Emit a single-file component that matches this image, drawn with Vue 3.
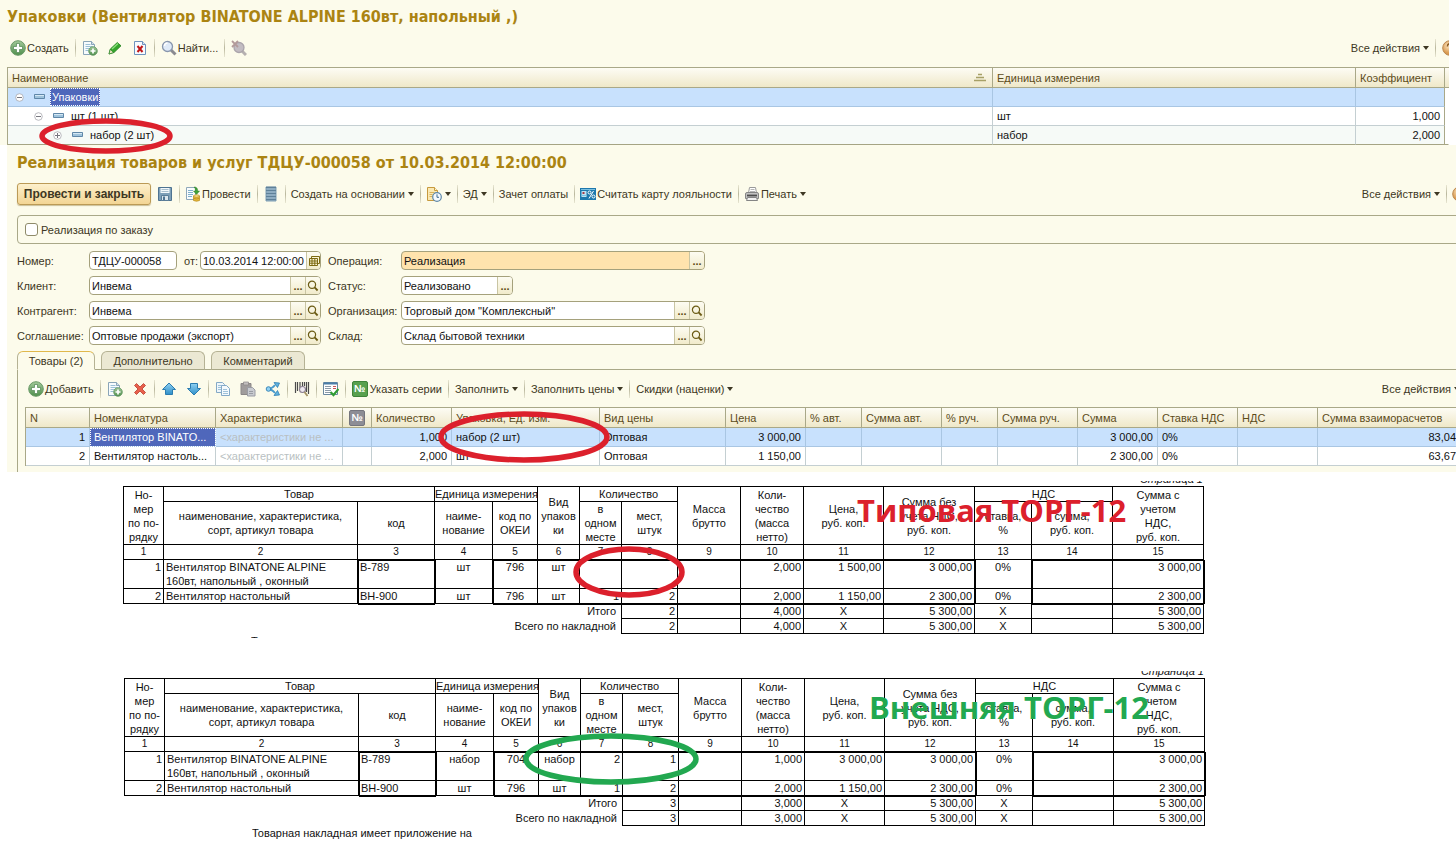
<script setup>
const packs = [
  { name: 'Упаковки', level: 0, open: true, unit: '', ratio: '', selected: true },
  { name: 'шт (1 шт)', level: 1, open: true, unit: 'шт', ratio: '1,000' },
  { name: 'набор (2 шт)', level: 2, open: false, unit: 'набор', ratio: '2,000', alt: true }
]

const goods = [
  { n: 1, name: 'Вентилятор BINATO...', qty: '1,000', pack: 'набор (2 шт)', price: '3 000,00', sum: '3 000,00', total: '83,04', selected: true },
  { n: 2, name: 'Вентилятор настоль...', qty: '2,000', pack: 'шт', price: '1 150,00', sum: '2 300,00', total: '63,67' }
]

const forms = [
  {
    id: 'standard',
    title: 'Типовая ТОРГ-12',
    rows: [
      { n: 1, name: ['Вентилятор BINATONE ALPINE', '160вт, напольный , оконный'], code: 'B-789', unit: 'шт', okei: '796', pack: 'шт', inOne: '', places: '', qty: '2,000', price: '1 500,00', sum: '3 000,00' },
      { n: 2, name: ['Вентилятор настольный'], code: 'BH-900', unit: 'шт', okei: '796', pack: 'шт', inOne: '1', places: '2', qty: '2,000', price: '1 150,00', sum: '2 300,00' }
    ],
    totals: { places: '2', qty: '4,000' }
  },
  {
    id: 'external',
    title: 'Внешняя ТОРГ-12',
    rows: [
      { n: 1, name: ['Вентилятор BINATONE ALPINE', '160вт, напольный , оконный'], code: 'B-789', unit: 'набор', okei: '704', pack: 'набор', inOne: '2', places: '1', qty: '1,000', price: '3 000,00', sum: '3 000,00' },
      { n: 2, name: ['Вентилятор настольный'], code: 'BH-900', unit: 'шт', okei: '796', pack: 'шт', inOne: '1', places: '2', qty: '2,000', price: '1 150,00', sum: '2 300,00' }
    ],
    totals: { places: '3', qty: '3,000' }
  }
]
</script>

<template>
  <svg class="sprite" aria-hidden="true">
    <defs>
      <linearGradient id="gGreen" x1="0" y1="0" x2="0" y2="1"><stop offset="0" stop-color="#a3c99a" /><stop offset="1" stop-color="#4f8f4c" /></linearGradient>
      <linearGradient id="gBlue" x1="0" y1="0" x2="0" y2="1"><stop offset="0" stop-color="#8fd0f2" /><stop offset="1" stop-color="#2f8fc8" /></linearGradient>
      <radialGradient id="gOrange" cx=".4" cy=".35"><stop offset="0" stop-color="#fde6c0" /><stop offset="1" stop-color="#d99a50" /></radialGradient>
    </defs>
    <symbol id="add" viewBox="0 0 16 16">
      <circle cx="8" cy="8" r="7.3" fill="url(#gGreen)" stroke="#6b9a68" />
      <path d="M6.5 3.500h3v3h3v3h-3v3h-3v-3h-3v-3h3z" fill="#fff" stroke="#4f8550" stroke-width=".7" />
    </symbol>
    <symbol id="copyadd" viewBox="0 0 16 16">
      <path d="M1.500 1.500h8l3 3v10h-11z" fill="#f7fbfd" stroke="#8aa5b8" />
      <path d="M9.500 1.500v3h3" fill="#cfe0ea" stroke="#8aa5b8" />
      <path d="M3.500 4.500h5M3.500 6.500h7M3.500 8.500h4M3.500 10.500h3" stroke="#9cc0d6" />
      <circle cx="11" cy="11" r="4.300" fill="url(#gGreen)" stroke="#5f9560" stroke-width=".8" />
      <path d="M11 8.500v5M8.500 11h5" stroke="#fff" stroke-width="1.700" />
    </symbol>
    <symbol id="pencil" viewBox="0 0 16 16">
      <path d="M2 14l1.300-5 7-6.500 3.700 3.300-7 6.700z" fill="#35a52c" stroke="#207d1c" stroke-width=".8" />
      <path d="M5 9l6-5.500" stroke="#8be07c" stroke-width="1.300" />
      <path d="M2 14l1.300-4.500 3.200 3z" fill="#f2e8c8" stroke="#207d1c" stroke-width=".6" />
    </symbol>
    <symbol id="deldoc" viewBox="0 0 16 16">
      <path d="M2.500 1.500h8l3 3v10h-11z" fill="#f8fbff" stroke="#6f93bd" />
      <path d="M10.500 1.500v3h3" fill="#d5e3f3" stroke="#6f93bd" />
      <path d="M5.500 6l5 6M10.500 6l-5 6" stroke="#c01818" stroke-width="2" />
    </symbol>
    <symbol id="find" viewBox="0 0 16 16">
      <path d="M10 10l4.500 4.500" stroke="#8a8a90" stroke-width="3" />
      <circle cx="6.500" cy="6.500" r="5" fill="#dfeaf8" stroke="#8896ad" stroke-width="1.300" />
      <path d="M3.500 6a3 3 0 0 1 3-3" fill="none" stroke="#fff" stroke-width="1.500" />
    </symbol>
    <symbol id="findoff" viewBox="0 0 16 16">
      <path d="M11 11l4 4" stroke="#b5b0b0" stroke-width="3" />
      <circle cx="8" cy="7.500" r="5" fill="#c2bcc2" stroke="#aaa4ab" stroke-width="1.300" />
      <path d="M1 1l6 6M7 1l-6 6" stroke="#b39a9a" stroke-width="1.800" />
    </symbol>
    <symbol id="help" viewBox="0 0 16 16">
      <circle cx="8" cy="8" r="7.300" fill="url(#gOrange)" stroke="#bb8850" />
      <path d="M5.500 6.500a2.500 2.500 0 1 1 3.500 2c-1 .5-1 .8-1 1.500M8 11.500v1.200" fill="none" stroke="#8a5a22" stroke-width="1.500" />
    </symbol>
    <symbol id="save" viewBox="0 0 16 16">
      <path d="M1.500 1.500h13v13h-13z" fill="#7d9fb8" stroke="#4e7391" />
      <path d="M3.500 2h9v5h-9z" fill="#f3f8fb" /><path d="M4.500 3.500h7M4.500 5.500h7" stroke="#a8bfce" />
      <path d="M4.500 9.500h7v5h-7z" fill="#dbe6ed" stroke="#5a7d98" /><path d="M6 10.500h2v3.500h-2z" fill="#4e7391" />
    </symbol>
    <symbol id="post" viewBox="0 0 16 16">
      <path d="M1.500 1.500h9v12h-9z" fill="#fafcfd" stroke="#8fa8ba" />
      <path d="M3 4.500h5M3 6.500h5M3 8.500h5M3 10.500h4" stroke="#7fb0cc" />
      <path d="M9 1q4 0 3.500 4h2l-3 3.500-3-3.500h2q.3-2.500-1.500-4z" fill="#41a338" stroke="#2c7d27" stroke-width=".5" />
      <path d="M8.500 10h6v4.500q-3 1.500-6 0z" fill="#e6b93c" stroke="#b98b1c" stroke-width=".7" />
      <ellipse cx="11.500" cy="10" rx="3" ry="1.200" fill="#fbe490" stroke="#b98b1c" stroke-width=".7" />
      <path d="M8.500 12.300q3 1.300 6 0" fill="none" stroke="#b98b1c" stroke-width=".7" />
    </symbol>
    <symbol id="register" viewBox="0 0 16 16">
      <path d="M3 1h10v14h-10z" fill="#9fbdd0" stroke="#7f9fb5" />
      <path d="M3 1.500h10M3 4.500h10M3 7.500h10M3 10.500h10M3 13.500h10" stroke="#5f8199" stroke-width="1.500" />
    </symbol>
    <symbol id="docclock" viewBox="0 0 16 16">
      <path d="M1.500 1.500h7l3 3v10h-10z" fill="#fbe9b2" stroke="#c79a3e" />
      <path d="M8.500 1.500v3h3" fill="#fff5d2" stroke="#c79a3e" />
      <path d="M3.500 6.500h5M3.500 8.500h3M3.500 10.500h3" stroke="#d8b25c" />
      <circle cx="11" cy="11" r="4.300" fill="#f5fafd" stroke="#5d87a8" stroke-width="1.200" />
      <path d="M11 8.300v3h2" fill="none" stroke="#3f6a8c" />
    </symbol>
    <symbol id="card" viewBox="0 0 16 16">
      <path d="M0 2h16v12h-16z" fill="#1d78ad" />
      <path d="M1.500 5h5v6h-5z" fill="#bfe2f2" /><path d="M2.500 6h2v2h-2z" fill="#a33a48" /><path d="M1.500 9.500h5M1 3.500h14" stroke="#7cc0e0" />
      <circle cx="9.500" cy="6.500" r="1.500" fill="none" stroke="#fff" /><circle cx="13.500" cy="10.500" r="1.500" fill="none" stroke="#fff" /><path d="M13.500 5l-4.500 7.500" stroke="#fff" />
    </symbol>
    <symbol id="printer" viewBox="0 0 16 16">
      <path d="M4.500 7l1-5.500h6l1 5.500" fill="#fff" stroke="#9a9a9a" /><path d="M6.500 3.500h4M6 5.500h5" stroke="#b5b5b5" />
      <path d="M1.500 8q0-1.500 1.500-1.500h10q1.500 0 1.500 1.500v4.500h-13z" fill="#c2c2c2" stroke="#858585" /><path d="M3 9.500h10" stroke="#4c4c4c" stroke-width="1.800" />
      <path d="M3.500 11.500h9l1 3h-11z" fill="#f2f2f2" stroke="#858585" />
    </symbol>
    <symbol id="cross" viewBox="0 0 16 16">
      <path d="M2.500 4.500l2-2 3.500 3.500 3.500-3.500 2 2-3.500 3.500 3.500 3.500-2 2-3.500-3.500-3.500 3.500-2-2 3.500-3.500z" fill="#e8604c" stroke="#b93b2c" stroke-width=".8" />
    </symbol>
    <symbol id="up" viewBox="0 0 16 16">
      <path d="M8 2l6.500 6.500h-3v5h-7v-5h-3z" fill="url(#gBlue)" stroke="#2b7cb0" />
    </symbol>
    <symbol id="down" viewBox="0 0 16 16">
      <path d="M8 14l6.500-6.500h-3v-5h-7v5h-3z" fill="url(#gBlue)" stroke="#2b7cb0" />
    </symbol>
    <symbol id="copy" viewBox="0 0 16 16">
      <path d="M1.500 1.500h6l2 2v8h-8z" fill="#eef6fb" stroke="#84a9c6" /><path d="M3 4.500h4M3 6.500h3M3 8.500h3" stroke="#9fc2da" />
      <path d="M6.500 4.500h5l3 3v7h-8z" fill="#f5fafd" stroke="#84a9c6" /><path d="M8 8.500h4M8 10.500h5M8 12.500h5" stroke="#9fc2da" />
    </symbol>
    <symbol id="paste" viewBox="0 0 16 16">
      <path d="M1 2.500h10v11h-10z" fill="#a09c9c" stroke="#8b8787" /><path d="M3.500 1h5v3h-5z" fill="#c3bfbf" stroke="#8b8787" stroke-width=".7" />
      <path d="M7.500 6.500h5l2.500 2.500v6h-7.500z" fill="#c9cbd0" stroke="#9a9ca4" /><path d="M9 10.500h4M9 12.500h4" stroke="#9a9ca4" />
    </symbol>
    <symbol id="share" viewBox="0 0 16 16">
      <path d="M2 8q5 0 8-4M2 8q5 0 8 4" fill="none" stroke="#4a9bcd" stroke-width="2" />
      <path d="M9 1.500l5.500.5-2 4.500zM9 14.500l5.500-.5-2-4.500z" fill="#5fb2e0" stroke="#2f7fb3" stroke-width=".8" />
      <circle cx="3.500" cy="8" r="2.300" fill="#8fd0f2" stroke="#2f7fb3" stroke-width=".9" />
    </symbol>
    <symbol id="barcode" viewBox="0 0 16 16">
      <path d="M1.500 1v11M3.500 1v9M6 1v6M8.500 1v4M10.500 1v4M12.500 1v10M14.500 1v12" stroke="#4b4b4b" stroke-width="1.200" />
      <circle cx="8.500" cy="8.500" r="3" fill="#eee9f0" stroke="#8b7f92" stroke-width="1.100" /><path d="M10.500 11l3 4" stroke="#a49468" stroke-width="1.800" />
    </symbol>
    <symbol id="listok" viewBox="0 0 16 16">
      <path d="M.5 1.500h14v12h-14z" fill="#fff" stroke="#6a88a0" /><path d="M1 2.500h13" stroke="#4b7ea8" stroke-width="2" />
      <path d="M2 5.500h6M2 7.500h6M2 9.500h6M2 11.500h6" stroke="#8b9aa8" /><path d="M10 5.500h3M10 7.500h3" stroke="#c55" />
      <path d="M7.500 11l3 3 5-6" fill="none" stroke="#2f9c33" stroke-width="2.200" />
    </symbol>
    <symbol id="calendar" viewBox="0 0 12 12">
      <path d="M3.500 1.500h8v7h-8z" fill="#fbf5d5" stroke="#7d6a12" /><path d="M1.500 3.500h8v7h-8z" fill="#fbf5d5" stroke="#7d6a12" />
      <path d="M1.500 6h8M1.500 8.200h8M4 3.500v7M6.800 3.500v7" stroke="#7d6a12" />
    </symbol>
    <symbol id="lens" viewBox="0 0 12 12">
      <circle cx="5" cy="4.800" r="3.600" fill="none" stroke="#6b5b14" stroke-width="1.200" /><path d="M7.600 7.400l3 3.100" stroke="#6b5b14" stroke-width="1.800" />
    </symbol>
    <symbol id="sort" viewBox="0 0 12 10">
      <path d="M4 1.500h4M2 4.500h8M0 7.500h12" stroke="#a7a066" stroke-width="1.600" />
    </symbol>
    <symbol id="item" viewBox="0 0 12 6">
      <path d="M.5.5h10v4h-10z" fill="#9fc3dc" stroke="#5f87a8" /><path d="M1 1.500h9" stroke="#d5e8f4" />
    </symbol>
  </svg>

  <main class="page">
    <section class="packs">
      <h1 class="title">Упаковки (Вентилятор BINATONE ALPINE 160вт, напольный ,)</h1>
      <div class="bar">
        <button class="tb"><svg class="ic"><use href="#add" /></svg>Создать</button>
        <i class="sep"></i>
        <button class="tb" aria-label="Скопировать"><svg class="ic"><use href="#copyadd" /></svg></button>
        <button class="tb wide" aria-label="Изменить"><svg class="ic"><use href="#pencil" /></svg></button>
        <button class="tb wide" aria-label="Удалить"><svg class="ic"><use href="#deldoc" /></svg></button>
        <i class="sep"></i>
        <button class="tb"><svg class="ic"><use href="#find" /></svg>Найти...</button>
        <i class="sep"></i>
        <button class="tb" aria-label="Отменить поиск"><svg class="ic"><use href="#findoff" /></svg></button>
        <div class="end">
          <button class="tb drop">Все действия</button>
          <i class="sep"></i>
          <button class="tb cut" aria-label="Справка"><svg class="ic"><use href="#help" /></svg></button>
        </div>
      </div>
      <table class="grid tree">
        <colgroup><col /><col class="c-unit" /><col class="c-ratio" /><col class="c-scroll" /></colgroup>
        <thead>
          <tr>
            <th><span class="sorted">Наименование<svg class="sort"><use href="#sort" /></svg></span></th>
            <th>Единица измерения</th>
            <th>Коэффициент</th>
            <th></th>
          </tr>
        </thead>
        <tbody>
          <tr v-for="p in packs" :key="p.name" :class="{ sel: p.selected, alt: p.alt }">
            <td>
              <span class="node" :class="'l' + p.level">
                <svg class="knob" viewBox="0 0 9 9"><circle cx="4.500" cy="4.500" r="3.800" fill="#fff" stroke="#a9a9b0" stroke-width=".8" /><path :d="p.open ? 'M2 4.500h5' : 'M2 4.500h5M4.500 2v5'" stroke="#77777f" /></svg>
                <svg class="item"><use href="#item" /></svg>
                <span class="label" :class="{ cur: p.selected }">{{ p.name }}</span>
              </span>
            </td>
            <td>{{ p.unit }}</td>
            <td class="num">{{ p.ratio }}</td>
            <td class="void"></td>
          </tr>
        </tbody>
      </table>
      <svg class="ring ring-tree" viewBox="0 0 134 36"><ellipse cx="67" cy="18" rx="64" ry="15" /></svg>
    </section>

    <section class="doc">
      <h2 class="title">Реализация товаров и услуг ТДЦУ-000058 от 10.03.2014 12:00:00</h2>
      <div class="bar">
        <button class="main-btn">Провести и закрыть</button>
        <button class="tb" aria-label="Записать"><svg class="ic"><use href="#save" /></svg></button>
        <i class="sep"></i>
        <button class="tb"><svg class="ic"><use href="#post" /></svg>Провести</button>
        <i class="sep"></i>
        <button class="tb" aria-label="Движения"><svg class="ic"><use href="#register" /></svg></button>
        <i class="sep"></i>
        <button class="tb drop">Создать на основании</button>
        <i class="sep"></i>
        <button class="tb drop" aria-label="Отчеты"><svg class="ic"><use href="#docclock" /></svg></button>
        <i class="sep"></i>
        <button class="tb drop">ЭД</button>
        <i class="sep"></i>
        <button class="tb">Зачет оплаты</button>
        <i class="sep"></i>
        <button class="tb"><svg class="ic"><use href="#card" /></svg>Считать карту лояльности</button>
        <i class="sep"></i>
        <button class="tb drop"><svg class="ic"><use href="#printer" /></svg>Печать</button>
        <div class="end">
          <button class="tb drop">Все действия</button>
          <i class="sep"></i>
          <button class="tb cut" aria-label="Справка"><svg class="ic"><use href="#help" /></svg></button>
        </div>
      </div>

      <div class="order">
        <input id="byOrder" type="checkbox" /><label for="byOrder">Реализация по заказу</label>
      </div>

      <div class="fields">
        <label for="num">Номер:</label>
        <div class="pair">
          <div class="fld short"><input id="num" value="ТДЦУ-000058" /></div>
          <label for="date">от:</label>
          <div class="fld grow"><input id="date" value="10.03.2014 12:00:00" /><button aria-label="Календарь"><svg><use href="#calendar" /></svg></button></div>
        </div>
        <label for="op">Операция:</label>
        <div class="fld req"><input id="op" value="Реализация" /><button>...</button></div>

        <label for="client">Клиент:</label>
        <div class="fld"><input id="client" value="Инвема" /><button>...</button><button aria-label="Открыть"><svg><use href="#lens" /></svg></button></div>
        <label for="status">Статус:</label>
        <div class="fld status"><input id="status" value="Реализовано" /><button>...</button></div>

        <label for="partner">Контрагент:</label>
        <div class="fld"><input id="partner" value="Инвема" /><button>...</button><button aria-label="Открыть"><svg><use href="#lens" /></svg></button></div>
        <label for="org">Организация:</label>
        <div class="fld"><input id="org" value="Торговый дом &quot;Комплексный&quot;" /><button>...</button><button aria-label="Открыть"><svg><use href="#lens" /></svg></button></div>

        <label for="deal">Соглашение:</label>
        <div class="fld"><input id="deal" value="Оптовые продажи (экспорт)" /><button>...</button><button aria-label="Открыть"><svg><use href="#lens" /></svg></button></div>
        <label for="store">Склад:</label>
        <div class="fld"><input id="store" value="Склад бытовой техники" /><button>...</button><button aria-label="Открыть"><svg><use href="#lens" /></svg></button></div>
      </div>

      <div class="tabs" role="tablist">
        <button role="tab" aria-selected="true" class="tab on">Товары (2)</button>
        <button role="tab" class="tab t2">Дополнительно</button>
        <button role="tab" class="tab t3">Комментарий</button>
      </div>

      <div class="panel">
        <div class="bar">
          <button class="tb"><svg class="ic"><use href="#add" /></svg>Добавить</button>
          <i class="sep"></i>
          <button class="tb" aria-label="Скопировать"><svg class="ic"><use href="#copyadd" /></svg></button>
          <button class="tb wide" aria-label="Удалить"><svg class="ic"><use href="#cross" /></svg></button>
          <i class="sep"></i>
          <button class="tb" aria-label="Вверх"><svg class="ic"><use href="#up" /></svg></button>
          <button class="tb wide" aria-label="Вниз"><svg class="ic"><use href="#down" /></svg></button>
          <i class="sep"></i>
          <button class="tb" aria-label="Копировать строки"><svg class="ic"><use href="#copy" /></svg></button>
          <button class="tb wide" aria-label="Вставить строки"><svg class="ic"><use href="#paste" /></svg></button>
          <button class="tb wide" aria-label="Разбить"><svg class="ic"><use href="#share" /></svg></button>
          <i class="sep"></i>
          <button class="tb" aria-label="Штрихкод"><svg class="ic"><use href="#barcode" /></svg></button>
          <i class="sep"></i>
          <button class="tb" aria-label="Проверить"><svg class="ic"><use href="#listok" /></svg></button>
          <i class="sep"></i>
          <button class="tb"><b class="no">№</b>Указать серии</button>
          <i class="sep"></i>
          <button class="tb drop">Заполнить</button>
          <i class="sep"></i>
          <button class="tb drop">Заполнить цены</button>
          <i class="sep"></i>
          <button class="tb drop">Скидки (наценки)</button>
          <div class="end"><button class="tb drop cut-drop">Все действия</button></div>
        </div>
        <table class="grid goods">
          <colgroup>
            <col class="w64" /><col class="w126" /><col class="w127" /><col class="w29" /><col class="w80" /><col class="w148" /><col class="w126" /><col class="w80" />
            <col class="w56" /><col class="w80" /><col class="w56" /><col class="w80" /><col class="w80" /><col class="w80" /><col class="w80" /><col />
          </colgroup>
          <thead>
            <tr>
              <th>N</th><th>Номенклатура</th><th>Характеристика</th><th class="mid"><b class="no grey">№</b></th><th>Количество</th><th>Упаковка, Ед. изм.</th><th>Вид цены</th><th>Цена</th>
              <th>% авт.</th><th>Сумма авт.</th><th>% руч.</th><th>Сумма руч.</th><th>Сумма</th><th>Ставка НДС</th><th>НДС</th><th class="edge">Сумма взаиморасчетов</th>
            </tr>
          </thead>
          <tbody>
            <tr v-for="g in goods" :key="g.n" :class="{ sel: g.selected }">
              <td class="num">{{ g.n }}</td>
              <td :class="{ curcell: g.selected }">{{ g.name }}</td>
              <td class="dim">&lt;характеристики не ...</td>
              <td></td>
              <td class="num">{{ g.qty }}</td>
              <td>{{ g.pack }}</td>
              <td>Оптовая</td>
              <td class="num">{{ g.price }}</td>
              <td></td><td></td><td></td><td></td>
              <td class="num">{{ g.sum }}</td>
              <td>0%</td>
              <td></td>
              <td class="num edge">{{ g.total }}</td>
            </tr>
          </tbody>
        </table>
      </div>
      <svg class="ring ring-goods" viewBox="0 0 172 52"><ellipse cx="86" cy="26" rx="83" ry="23" /></svg>
    </section>

    <section v-for="f in forms" :key="f.id" class="form" :class="f.id">
      <p class="pageno"><span>Страница 1</span></p>
      <div class="sheet">
        <table class="torg">
          <colgroup>
            <col class="k1" /><col class="k2" /><col class="k3" /><col class="k4" /><col class="k5" /><col class="k6" /><col class="k6" /><col class="k8" />
            <col class="k9" /><col class="k9" /><col class="k11" /><col class="k12" /><col class="k13" /><col class="k14" /><col class="k12" />
          </colgroup>
          <thead>
            <tr class="h1">
              <th rowspan="2">Но-<br />мер<br />по по-<br />рядку</th>
              <th colspan="2">Товар</th>
              <th colspan="2">Единица измерения</th>
              <th rowspan="2">Вид<br />упаков<br />ки</th>
              <th colspan="2">Количество</th>
              <th rowspan="2">Масса<br />брутто</th>
              <th rowspan="2">Коли-<br />чество<br />(масса<br />нетто)</th>
              <th rowspan="2">Цена,<br />руб. коп.</th>
              <th rowspan="2">Сумма без<br />учета НДС,<br />руб. коп.</th>
              <th colspan="2">НДС</th>
              <th rowspan="2">Сумма с<br />учетом<br />НДС,<br />руб. коп.</th>
            </tr>
            <tr class="h2">
              <th>наименование, характеристика,<br />сорт, артикул товара</th>
              <th>код</th>
              <th>наиме-<br />нование</th>
              <th>код по<br />ОКЕИ</th>
              <th>в<br />одном<br />месте</th>
              <th>мест,<br />штук</th>
              <th>ставка,<br />%</th>
              <th>сумма,<br />руб. коп.</th>
            </tr>
            <tr class="h3"><th v-for="i in 15" :key="i">{{ i }}</th></tr>
          </thead>
          <tbody>
            <tr v-for="(r, i) in f.rows" :key="r.n" :class="i === 0 ? 'first' : 'last'">
              <td class="r">{{ r.n }}</td>
              <td><div v-for="line in r.name" :key="line">{{ line }}</div></td>
              <td class="bl bt bb br">{{ r.code }}</td>
              <td class="c">{{ r.unit }}</td>
              <td class="c bl bt bb">{{ r.okei }}</td>
              <td class="c bt bb">{{ r.pack }}</td>
              <td class="r bt bb">{{ r.inOne }}</td>
              <td class="r bt bb">{{ r.places }}</td>
              <td class="bt bb"></td>
              <td class="r bt bb">{{ r.qty }}</td>
              <td class="r bt bb">{{ r.price }}</td>
              <td class="r bt bb br">{{ r.sum }}</td>
              <td class="c">0%</td>
              <td class="bl bt bb"></td>
              <td class="r bt bb br">{{ r.sum }}</td>
            </tr>
          </tbody>
          <tfoot>
            <tr v-for="t in ['Итого', 'Всего по накладной']" :key="t">
              <td colspan="7" class="r total">{{ t }}</td>
              <td class="r">{{ f.totals.places }}</td>
              <td></td>
              <td class="r">{{ f.totals.qty }}</td>
              <td class="c">X</td>
              <td class="r">5 300,00</td>
              <td class="c">X</td>
              <td></td>
              <td class="r">5 300,00</td>
            </tr>
          </tfoot>
        </table>
        <svg v-if="f.id === 'standard'" class="ring ring-form" viewBox="0 0 112 52"><ellipse cx="56" cy="26" rx="53" ry="23" /></svg>
        <svg v-else class="ring ring-form" viewBox="0 0 176 52"><ellipse cx="88" cy="26" rx="85" ry="23" /></svg>
        <strong class="stamp">{{ f.title }}</strong>
      </div>
      <p class="foot">Товарная накладная имеет приложение на</p>
    </section>
  </main>
</template>

<style>
html { background: #fff; overflow: hidden; }
</style>

<style scoped>
.page { font: 11px/14px "Liberation Sans", Arial, sans-serif; color: #3d3723; overflow: hidden; }
.page * { box-sizing: border-box; }
.sprite { position: absolute; width: 0; height: 0; }
button, input { font: inherit; color: inherit; }
.title { margin: 0; font: bold 16px/20px "DejaVu Sans Condensed", "DejaVu Sans", sans-serif; color: #ab8412; white-space: nowrap; }

.packs { position: relative; margin-right: 7px; padding-top: 7px; background: #fcfbeb; }
.packs .title { padding-left: 7px; }
.packs .bar { margin: 10px 0 8px; padding-left: 10px; }
.bar { display: flex; align-items: center; height: 22px; white-space: nowrap; }
.tb { display: flex; align-items: center; gap: 1px; padding: 0; border: 0; background: none; flex: none; }
.tb.wide { margin-left: 9px; }
.ic { width: 16px; height: 16px; flex: none; }
.sep { width: 1px; height: 18px; margin: 0 6px; flex: none; background: linear-gradient(#e8e6d2, #b9b79d, #e8e6d2); }
.doc > .bar .sep { margin: 0 5px 0 6px; }
.drop::after { content: ""; margin-left: 2px; border: 3px solid transparent; border-top: 4px solid #3d3723; border-bottom: 0; }
.end { display: flex; align-items: center; margin-left: auto; }
.cut { width: 7px; overflow: hidden; }
.doc .cut { width: 4px; }

.grid { border-collapse: separate; border-spacing: 0; table-layout: fixed; width: 100%; }
.grid th { height: 21px; padding: 0 4px; text-align: left; font-weight: normal; color: #5c4c1a; white-space: nowrap; overflow: hidden; background: linear-gradient(#fdfcf4, #f6f2df 50%, #efe8c8); border: solid #a9a888; border-width: 1px 1px 1px 0; }
.grid td { height: 19px; padding: 0 4px; color: #111; white-space: nowrap; overflow: hidden; background: #fff; border: solid #c4cfd2; border-width: 0 1px 1px 0; }
.grid .sel td { background: #c8e1fd; border-color: #a9c6e3; }
.grid .alt td { background: #f6faf7; }
.grid .num { text-align: right; }
.tree { width: auto; min-width: calc(100% - 7px); margin-left: 7px; border-left: 1px solid #a9a888; }
.tree tr:last-child td { height: 18px; border-bottom-color: #a5a484; }
.tree td:nth-child(3) { border-right-color: #a9a888; }
.tree tr .void { background: #fff; border-color: #fff; padding: 0; }
.c-unit { width: 363px; }
.c-ratio { width: 89px; }
.c-scroll { width: 4px; }
.tree th:last-child { padding: 0; border-right: 0; }
.sorted { display: flex; justify-content: space-between; align-items: center; }
.sort { width: 12px; height: 10px; margin-right: 2px; }
.node { display: flex; align-items: center; }
.l0 { padding-left: 3px; }
.l1 { padding-left: 22px; }
.l2 { padding-left: 41px; }
.knob { width: 9px; height: 9px; }
.item { width: 12px; height: 6px; margin: 0 4px 0 10px; }
.label { padding: 1px; border: 1px solid transparent; }
.label.cur { background: #4f67bb; color: #fff; border: 1px dotted #fff; }

.ring { position: absolute; fill: none; stroke: #dc202c; stroke-width: 5.500; }
.ring-tree { left: 39px; top: 118px; width: 134px; height: 36px; z-index: 2; }

.doc { position: relative; margin-left: 7px; padding-top: 8px; background: #fcfbeb; overflow: hidden; }
.doc .title { padding-left: 10px; }
.doc > .bar { margin-top: 10px; padding-left: 10px; }
.main-btn { height: 22px; width: 134px; margin-right: 6px; padding: 0; font-size: 12px; font-weight: bold; border: 1px solid #bb9a56; border-radius: 3px; background: linear-gradient(#fdf0cc, #f3d594); box-shadow: 0 1px 1px #cbbf97; white-space: nowrap; }
.order { display: flex; align-items: center; gap: 3px; height: 29px; margin: 10px -4px 7px 10px; padding-left: 7px; border: 1px solid #a9a888; border-radius: 4px; }
.order input { appearance: none; width: 13px; height: 13px; margin: 0; background: #fff; border: 1px solid #8f8b6a; border-radius: 3px; }
.fields { display: grid; grid-template-columns: 72px 232px 80px 304px; row-gap: 6px; margin-left: 10px; align-items: center; }
.fields > label:nth-of-type(even) { padding-left: 7px; }
.pair { display: flex; align-items: center; }
.pair label { margin: 0 2px 0 7px; }
.fld { display: flex; height: 19px; border: 1px solid #a5a17c; border-radius: 4px; background: #fff; overflow: hidden; }
.fld input { flex: 1; min-width: 0; padding: 0 0 0 2px; border: 0; background: none; color: #111; outline: 0; }
.fld button { display: flex; align-items: center; justify-content: center; width: 15px; padding: 0; border: 0; border-left: 1px solid #c9c5a3; background: linear-gradient(#fdfcf2, #f1ebcb); color: #5a4a12; font-weight: bold; }
.fld button svg { width: 12px; height: 12px; }
.short { width: 88px; }
.grow { flex: 1; }
.grow button { width: 14px; }
.req { background: #ffe3ad; }
.status { width: 112px; }

.tabs { display: flex; gap: 6px; margin: 6px 0 -1px 10px; }
.tab { position: relative; height: 19px; padding: 0; border: 1px solid #b5b294; border-bottom-color: #a9a888; border-radius: 6px 6px 0 0; background: #ebe8d3; }
.tab.on { width: 78px; background: #fcfbeb; border-top-color: #e0b84c; border-bottom-color: #fcfbeb; }
.t2 { width: 104px; }
.t3 { width: 94px; }
.panel { margin-left: 10px; padding: 8px 0 6px 7px; border: solid #a9a888; border-width: 1px 0 0 1px; }
.panel .bar { padding-left: 3px; margin-bottom: 7px; }
.no { display: inline-block; width: 16px; height: 16px; margin-right: 1px; font: bold 10px/14px "Liberation Sans", sans-serif; text-align: center; color: #fff; background: #58a04e; border: 1px solid #3f8339; border-radius: 2px; }
.no.grey { margin: 0; vertical-align: middle; background: #8d8d95; border-color: #75757d; }
.goods { border-left: 1px solid #a9a888; }
.goods .mid { padding: 0; text-align: center; }
.goods .edge { padding-right: 0; border-right: 0; }
.goods .dim { color: #b9bfc2; }
.goods .sel .curcell { background: #4f67bb; color: #fff; outline: 1px dotted #fff; outline-offset: -1px; }
.w64 { width: 64px; } .w126 { width: 126px; } .w127 { width: 127px; } .w29 { width: 29px; } .w80 { width: 80px; } .w148 { width: 148px; } .w56 { width: 56px; }
.cut-drop { margin-right: -4px; }
.ring-goods { left: 431px; top: 266px; width: 172px; height: 52px; }

.form { color: #111; }
.standard { padding: 9px 0 0 123px; }
.external { padding: 33px 0 0 124px; }
.pageno { display: flex; align-items: flex-end; justify-content: flex-end; width: 1080px; height: 5px; margin: 0; overflow: hidden; font-style: italic; }
.external .pageno { height: 7px; }
.sheet { position: relative; width: 1081px; }
.torg { width: 1081px; border-collapse: separate; border-spacing: 0; table-layout: fixed; }
.torg th, .torg td { padding: 0 2px; border: solid #000; border-width: 0 1px 1px 0; font-weight: normal; vertical-align: top; white-space: nowrap; }
.torg th { padding: 0; vertical-align: middle; text-align: center; }
.torg .h1 th { border-top-width: 1px; }
.torg .h1 th:first-child, .torg .h3 th:first-child, .torg tbody td:first-child { border-left-width: 1px; }
.h1 { height: 16px; } .h2 { height: 43px; } .h3 { height: 15px; font-size: 10px; } .first { height: 29px; } .last, tfoot tr { height: 15px; }
.k1 { width: 41px; } .k2 { width: 194px; } .k3 { width: 77px; } .k4 { width: 58px; } .k5 { width: 45px; } .k6 { width: 42px; } .k8 { width: 56px; }
.k9 { width: 63px; } .k11 { width: 80px; } .k12 { width: 91px; } .k13 { width: 57px; } .k14 { width: 81px; }
.torg .r { text-align: right; }
.torg .c { text-align: center; }
.torg .total { border-bottom: 0; padding-right: 5px; }
.torg td { --l: 0 0; --t: 0 0; --b: 0 0; --r: 0 0; box-shadow: inset var(--l) #000, inset var(--t) #000, var(--b) #000, var(--r) #000; }
.torg .bl { --l: 1px 0; }
.torg .first .bt { --t: 0 1px; }
.torg .last .bb { --b: 0 1px; }
.torg .br { --r: 1px 0; }
.ring-form { left: 450px; top: 60px; width: 112px; height: 52px; }
.external .ring-form { left: 399px; top: 55px; width: 176px; stroke: #22a850; }
.stamp { position: absolute; left: 734px; top: 4px; font: bold 31px/40px "Open Sans", "Noto Sans", sans-serif; color: #dc202c; white-space: nowrap; }
.external .stamp { left: 745px; top: 9px; color: #22a850; }
.foot { margin: 0 0 0 128px; height: 4px; overflow: hidden; }
.external .foot { height: 14px; }
</style>
